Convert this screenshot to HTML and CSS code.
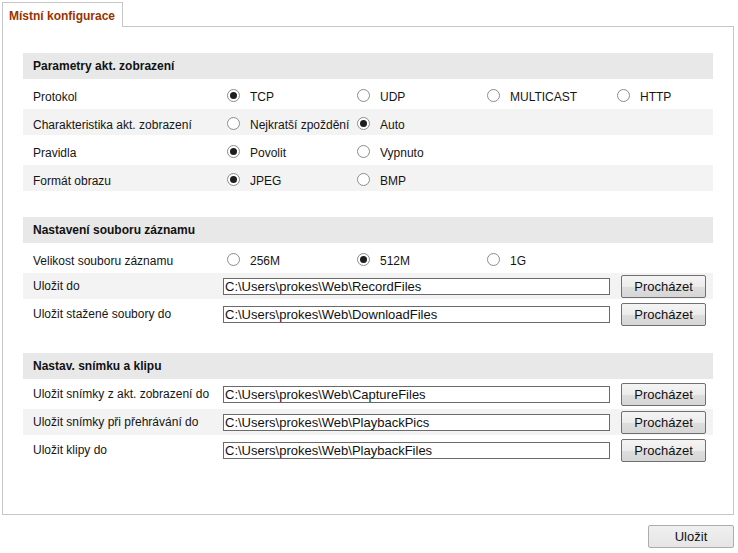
FILE: index.html
```html
<!DOCTYPE html>
<html lang="cs">
<head>
<meta charset="utf-8">
<title>Místní konfigurace</title>
<link rel="stylesheet" href="styles.css">
</head>
<body>
<div class="page">
  <div class="tabs">
    <div class="tab">Místní konfigurace</div>
    <div class="tab-fill"></div>
  </div>
  <div class="panel">
    <section class="group">
      <div class="group-title">Parametry akt. zobrazení</div>
      <div class="row choice">
        <div class="label">Protokol</div>
        <div class="value">
          <span class="opt"><span class="radio checked"></span><span class="opt-text">TCP</span></span>
          <span class="opt"><span class="radio"></span><span class="opt-text">UDP</span></span>
          <span class="opt"><span class="radio"></span><span class="opt-text">MULTICAST</span></span>
          <span class="opt"><span class="radio"></span><span class="opt-text">HTTP</span></span>
        </div>
      </div>
      <div class="row choice alt">
        <div class="label">Charakteristika akt. zobrazení</div>
        <div class="value">
          <span class="opt"><span class="radio"></span><span class="opt-text">Nejkratší zpoždění</span></span>
          <span class="opt"><span class="radio checked"></span><span class="opt-text">Auto</span></span>
        </div>
      </div>
      <div class="row choice">
        <div class="label">Pravidla</div>
        <div class="value">
          <span class="opt"><span class="radio checked"></span><span class="opt-text">Povolit</span></span>
          <span class="opt"><span class="radio"></span><span class="opt-text">Vypnuto</span></span>
        </div>
      </div>
      <div class="row choice alt">
        <div class="label">Formát obrazu</div>
        <div class="value">
          <span class="opt"><span class="radio checked"></span><span class="opt-text">JPEG</span></span>
          <span class="opt"><span class="radio"></span><span class="opt-text">BMP</span></span>
        </div>
      </div>
    </section>

    <section class="group">
      <div class="group-title">Nastavení souboru záznamu</div>
      <div class="row choice">
        <div class="label">Velikost souboru záznamu</div>
        <div class="value">
          <span class="opt"><span class="radio"></span><span class="opt-text">256M</span></span>
          <span class="opt"><span class="radio checked"></span><span class="opt-text">512M</span></span>
          <span class="opt"><span class="radio"></span><span class="opt-text">1G</span></span>
        </div>
      </div>
      <div class="row alt">
        <div class="label">Uložit do</div>
        <div class="value">
          <div class="path">C:\Users\prokes\Web\RecordFiles</div>
          <button class="btn">Procházet</button>
        </div>
      </div>
      <div class="row">
        <div class="label">Uložit stažené soubory do</div>
        <div class="value">
          <div class="path">C:\Users\prokes\Web\DownloadFiles</div>
          <button class="btn">Procházet</button>
        </div>
      </div>
    </section>

    <section class="group">
      <div class="group-title">Nastav. snímku a klipu</div>
      <div class="row">
        <div class="label">Uložit snímky z akt. zobrazení do</div>
        <div class="value">
          <div class="path">C:\Users\prokes\Web\CaptureFiles</div>
          <button class="btn">Procházet</button>
        </div>
      </div>
      <div class="row alt">
        <div class="label">Uložit snímky při přehrávání do</div>
        <div class="value">
          <div class="path">C:\Users\prokes\Web\PlaybackPics</div>
          <button class="btn">Procházet</button>
        </div>
      </div>
      <div class="row">
        <div class="label">Uložit klipy do</div>
        <div class="value">
          <div class="path">C:\Users\prokes\Web\PlaybackFiles</div>
          <button class="btn">Procházet</button>
        </div>
      </div>
    </section>
  </div>
  <div class="actions">
    <button class="btn btn-save">Uložit</button>
  </div>
</div>
</body>
</html>
```

FILE: styles.css
```css
html, body {
  margin: 0;
  padding: 0;
  background: #ffffff;
}

body {
  font-family: "Liberation Sans", Arial, sans-serif;
  font-size: 12px;
  color: #151515;
}

.page {
  padding: 2px 4px 0 2px;
}

.tabs {
  display: flex;
  height: 25px;
}

.tab {
  box-sizing: border-box;
  height: 25px;
  width: 121px;
  border: 1px solid #c6c6c6;
  border-bottom: none;
  padding: 5px 0 0 6px;
  line-height: 16px;
  font-weight: bold;
  color: #993300;
  background: #ffffff;
  white-space: nowrap;
}

.tab-fill {
  flex: 1;
  box-sizing: border-box;
  height: 25px;
  border-bottom: 1px solid #c6c6c6;
}

.panel {
  border: 1px solid #c6c6c6;
  border-top: none;
  padding: 26px 20px 51px 20px;
  display: flex;
  flex-direction: column;
  gap: 26px;
}

.group {
  display: flex;
  flex-direction: column;
  gap: 2px;
}

.group-title {
  height: 26px;
  display: flex;
  align-items: center;
  padding-left: 10px;
  background: #e8e8e8;
  font-weight: bold;
  color: #111;
}

.row {
  height: 26px;
  display: flex;
  align-items: center;
  padding-left: 10px;
}

.row.alt {
  background: #f3f3f3;
}

.label {
  width: 190px;
  flex: none;
  white-space: nowrap;
  line-height: 14px;
}

.row.choice .label {
  padding-top: 6px;
}

.value {
  display: flex;
  align-items: center;
}

.opt {
  width: 130px;
  display: flex;
  align-items: center;
  white-space: nowrap;
}

.opt-text {
  line-height: 14px;
  padding-top: 6px;
}

.radio {
  box-sizing: border-box;
  width: 13px;
  height: 13px;
  margin: 3px 10px 0 4px;
  border: 1px solid #8c8c8c;
  border-radius: 50%;
  background: #ffffff;
  display: inline-flex;
  align-items: center;
  justify-content: center;
  flex: none;
}

.radio.checked::after {
  content: "";
  width: 7px;
  height: 7px;
  border-radius: 50%;
  background: #1e1e1e;
}

.path {
  box-sizing: border-box;
  width: 387px;
  height: 17px;
  border: 1px solid #6a6a6a;
  background: #ffffff;
  font-size: 13px;
  line-height: 15px;
  padding-left: 1px;
  white-space: nowrap;
  overflow: hidden;
  color: #111;
}

.btn {
  box-sizing: border-box;
  width: 85px;
  height: 23px;
  margin-left: 11px;
  padding: 0;
  border: 1px solid #707070;
  border-radius: 2px;
  background: linear-gradient(#f4f4f4 0%, #ececec 50%, #dedede 51%, #d6d6d6 100%);
  font-family: "Liberation Sans", Arial, sans-serif;
  font-size: 13px;
  color: #111;
}

.actions {
  display: flex;
  justify-content: flex-end;
  margin-top: 10px;
}

.btn-save {
  width: 86px;
  margin-left: 0;
  border-color: #adadad;
  background: linear-gradient(#f0f0f0 0%, #e5e5e5 100%);
}
```
